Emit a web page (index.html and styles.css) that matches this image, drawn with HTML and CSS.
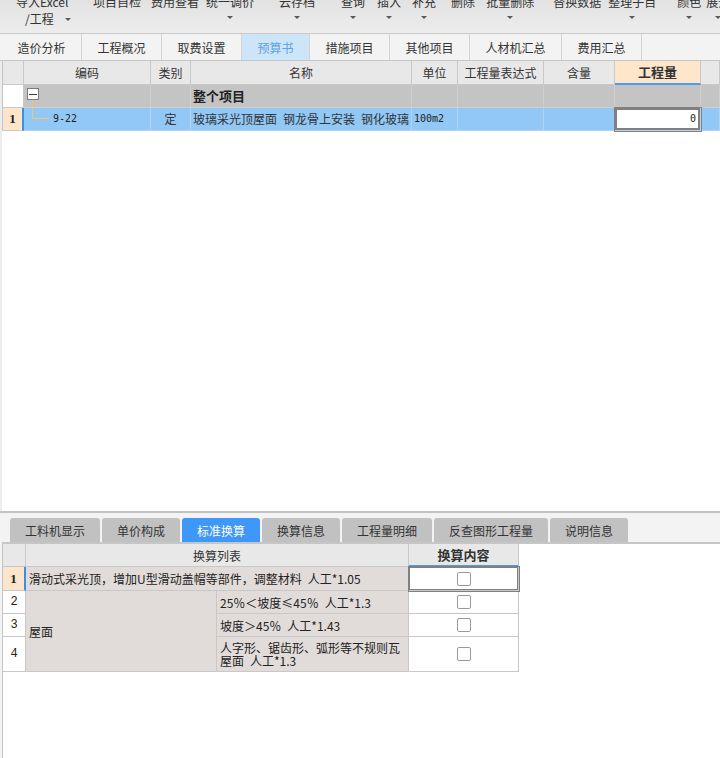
FILE: index.html
```html
<!DOCTYPE html>
<html lang="zh-CN">
<head>
<meta charset="utf-8">
<title>预算书</title>
<link rel="stylesheet" href="styles.css">
</head>
<body>
<div class="app">
  <div class="toolbar">
    <div class="tool tool-import">
      <span>导入Excel</span>
      <span class="tool-sub">/工程<i class="caret"></i></span>
    </div>
    <div class="tool"><span>项目自检</span></div>
    <div class="tool"><span>费用查看</span></div>
    <div class="tool"><span>统一调价</span><i class="caret"></i></div>
    <div class="tool"><span>云存档</span><i class="caret"></i></div>
    <div class="tool"><span>查询</span><i class="caret"></i></div>
    <div class="tool"><span>插入</span><i class="caret"></i></div>
    <div class="tool"><span>补充</span><i class="caret"></i></div>
    <div class="tool"><span>删除</span></div>
    <div class="tool"><span>批量删除</span><i class="caret"></i></div>
    <div class="tool"><span>替换数据</span></div>
    <div class="tool"><span>整理子目</span><i class="caret"></i></div>
    <div class="tool"><span>颜色</span><i class="caret"></i></div>
    <div class="tool"><span>展开</span><i class="caret"></i></div>
  </div>

  <div class="tabs">
    <div class="tab">造价分析</div>
    <div class="tab">工程概况</div>
    <div class="tab">取费设置</div>
    <div class="tab tab-narrow active">预算书</div>
    <div class="tab">措施项目</div>
    <div class="tab">其他项目</div>
    <div class="tab tab-wide">人材机汇总</div>
    <div class="tab">费用汇总</div>
  </div>

  <div class="grid-area">
    <div class="g-row g-head">
      <div class="c num"></div>
      <div class="c">编码</div>
      <div class="c">类别</div>
      <div class="c">名称</div>
      <div class="c">单位</div>
      <div class="c">工程量表达式</div>
      <div class="c">含量</div>
      <div class="c focus-head">工程量</div>
      <div class="c"></div>
    </div>
    <div class="g-row g-group">
      <div class="c num"></div>
      <div class="c code-group"><span class="tree-box"><i class="tree-dash"></i></span><span class="stem"></span></div>
      <div class="c"></div>
      <div class="c left bold-title">整个项目</div>
      <div class="c"></div>
      <div class="c"></div>
      <div class="c"></div>
      <div class="c"></div>
      <div class="c"></div>
    </div>
    <div class="g-row g-sel">
      <div class="c num num-cur">1</div>
      <div class="c code-leaf"><span class="elbow"></span><span class="mono">9-22</span></div>
      <div class="c">定</div>
      <div class="c left clip">玻璃采光顶屋面&ensp;钢龙骨上安装&ensp;钢化玻璃</div>
      <div class="c left"><span class="mono">100m2</span></div>
      <div class="c"></div>
      <div class="c"></div>
      <div class="c edit-cell"><span class="mono">0</span></div>
      <div class="c"></div>
    </div>
  </div>

  <div class="splitter"></div>

  <div class="bottom">
    <div class="btabs">
      <div class="btab btab-wide">工料机显示</div>
      <div class="btab">单价构成</div>
      <div class="btab active">标准换算</div>
      <div class="btab">换算信息</div>
      <div class="btab btab-wide">工程量明细</div>
      <div class="btab btab-xwide">反查图形工程量</div>
      <div class="btab">说明信息</div>
    </div>
    <div class="bgrid-area">
      <div class="bgrid">
        <div class="b head"></div>
        <div class="b head span2">换算列表</div>
        <div class="b head focus-head bold">换算内容</div>

        <div class="b rn rn-cur">1</div>
        <div class="b txt span2 row-cur">滑动式采光顶，增加U型滑动盖帽等部件，调整材料&ensp;人工*1.05</div>
        <div class="b chk chk-sel"><span class="box"></span></div>

        <div class="b rn">2</div>
        <div class="b txt span3">屋面</div>
        <div class="b txt">25％＜坡度≤45％&ensp;人工*1.3</div>
        <div class="b chk"><span class="box"></span></div>

        <div class="b rn">3</div>
        <div class="b txt">坡度＞45％&ensp;人工*1.43</div>
        <div class="b chk"><span class="box"></span></div>

        <div class="b rn">4</div>
        <div class="b txt wrap">人字形、锯齿形、弧形等不规则瓦屋面&ensp;人工*1.3</div>
        <div class="b chk"><span class="box"></span></div>
      </div>
    </div>
  </div>
</div>
</body>
</html>
```
FILE: styles.css
```css
* { box-sizing: border-box; margin: 0; padding: 0; }
html, body { width: 720px; height: 758px; overflow: hidden; }
body {
  font-family: "Noto Sans CJK SC", "Noto Sans", sans-serif;
  font-size: 12px;
  color: #333;
  background: #f3f3f3;
}
.app { display: flex; flex-direction: column; height: 758px; }

/* ---------- toolbar ---------- */
.toolbar {
  flex: none;
  height: 34px;
  display: flex;
  align-items: flex-start;
  overflow: hidden;
  white-space: nowrap;
  background: linear-gradient(#e2e2e2, #ededed);
  border-bottom: 1px solid #c9c9c9;
}
.tool {
  flex: none;
  display: flex;
  flex-direction: column;
  align-items: center;
  margin-top: -6px;
  line-height: 16px;
  color: #333;
}
.caret {
  display: block;
  width: 0; height: 0;
  border-left: 3px solid transparent;
  border-right: 3px solid transparent;
  border-top: 3px solid #5a5a5a;
  margin-top: 6px;
}
.tool-import { width: 54px; align-items: flex-start; }
.tool-sub { display: flex; align-items: center; padding-left: 9px; margin-top: 1px; }
.tool-sub .caret { margin-top: 1px; margin-left: 11px; }

.tool:nth-child(1) { margin-left: 16px; }
.tool:nth-child(2) { margin-left: 23px; }
.tool:nth-child(3) { margin-left: 10px; }
.tool:nth-child(4) { margin-left: 7px; }
.tool:nth-child(5) { margin-left: 25px; }
.tool:nth-child(6) { margin-left: 26px; }
.tool:nth-child(7) { margin-left: 12px; }
.tool:nth-child(8) { margin-left: 11px; }
.tool:nth-child(9) { margin-left: 15px; }
.tool:nth-child(10) { margin-left: 11px; }
.tool:nth-child(11) { margin-left: 19px; }
.tool:nth-child(12) { margin-left: 7px; }
.tool:nth-child(13) { margin-left: 21px; }
.tool:nth-child(14) { margin-left: 5px; }

/* ---------- main tabs ---------- */
.tabs {
  flex: none;
  height: 27px;
  display: flex;
  padding-left: 2px;
  background: #f3f3f3;
  border-bottom: 1px solid #c6c6c6;
}
.tab {
  width: 80px;
  display: flex;
  align-items: center;
  justify-content: center;
  border-right: 1px solid #d4d4d4;
  color: #333;
}
.tab-narrow { width: 68px; }
.tab-wide { width: 92px; }
.tab.active { background: #cde5f9; color: #5ea2e4; }

/* ---------- top grid ---------- */
.grid-area {
  flex: none;
  height: 450px;
  background: #fff;
  border-left: 2px solid #ededed;
}
.g-row {
  display: grid;
  grid-template-columns: 21px 127px 40px 221px 46px 86px 71px 86px 1fr;
  border-left: 1px solid #c4c4c4;
  height: 23px;
}
.g-head { height: 24px; background: #e8e8e8; }
.c {
  display: flex;
  align-items: center;
  justify-content: center;
  border-right: 1px solid #c8c8c8;
  border-bottom: 1px solid #c8c8c8;
  white-space: nowrap;
  overflow: hidden;
  line-height: 14px;
}
.g-head .c { color: #333; }
.focus-head {
  background: #fde6c9;
  font-weight: bold;
  font-size: 13px;
  border-bottom: 2px solid #4a9cf0 !important;
}
.g-group .c { background: #c4c4c4; border-color: #cfcfcf; }
.g-group .num { background: #fff; border-color: #c8c8c8; }
.g-sel .c { background: #92c8f6; border-color: #b3d3ee; }
.g-sel .num { background: #fde5cc; border-color: #c8c8c8; }
.num-cur {
  font-family: "Liberation Serif", serif;
  font-weight: bold;
  font-size: 13px;
  color: #222;
  border-right: 2px solid #3c8ee8 !important;
}
.left { justify-content: flex-start; padding-left: 2px; }
.clip { overflow: hidden; }
.bold-title { font-weight: bold; font-size: 13px; color: #222; }
.mono { font-family: "DejaVu Sans Mono", "Liberation Mono", monospace; font-size: 10px; color: #222; }

.code-group {
  flex-direction: column;
  align-items: flex-start;
  justify-content: flex-start;
  padding: 3px 0 0 3px;
}
.tree-box {
  width: 12px; height: 12px;
  border: 1px solid #7c7c7c;
  background: #fff;
  display: flex;
  align-items: center;
  justify-content: center;
}
.tree-dash { display: block; width: 8px; height: 1px; background: #3a3a3a; }
.stem { width: 1px; flex: 1; margin-left: 5px; background: #f2c46e; }

.code-leaf { justify-content: flex-start; align-items: center; }
.elbow {
  align-self: flex-start;
  flex: none;
  width: 17px;
  height: 11px;
  margin-left: 8px;
  margin-right: 4px;
  border-left: 1px solid #f2c46e;
  border-bottom: 1px solid #f2c46e;
}
.edit-cell {
  position: relative;
  z-index: 1;
  background: #fff !important;
  justify-content: flex-end;
  padding-right: 4px;
  box-shadow: 0 0 0 1px #808080, inset 0 0 0 2px #808080;
}

/* ---------- splitter ---------- */
.splitter { flex: none; height: 2px; background: #c2c2c2; }

/* ---------- bottom panel ---------- */
.bottom { flex: 1; display: flex; flex-direction: column; background: #f3f3f3; }
.btabs {
  flex: none;
  display: flex;
  gap: 2px;
  padding: 5px 0 0 10px;
  height: 29px;
}
.btab {
  width: 78px;
  height: 24px;
  display: flex;
  align-items: center;
  justify-content: center;
  background: #c1c1c1;
  border-radius: 3px 3px 0 0;
  color: #333;
}
.btab-wide { width: 90px; }
.btab-xwide { width: 114px; }
.btab.active { background: #3f97f9; color: #fff; }

.bgrid-area {
  flex: 1;
  background: #fff;
  border-top: 2px solid #c6c6c6;
  margin-left: 2px;
  border-left: 1px solid #c4c4c4;
}
.bgrid {
  display: grid;
  grid-template-columns: 23px 191px 192px 110px;
  grid-template-rows: 23px 24px 23px 23px 35px;
  width: 516px;
}
.b {
  display: flex;
  align-items: center;
  border-right: 1px solid #c8c8c8;
  border-bottom: 1px solid #c8c8c8;
  line-height: 13px;
  overflow: hidden;
}
.head { background: #e8e8e8; justify-content: center; }
.span2 { grid-column: span 2; }
.span3 { grid-row: span 3; }
.bold { font-weight: bold; }
.rn {
  justify-content: center;
  background: #fff;
  font-family: "Liberation Mono", monospace;
  font-size: 12px;
  color: #222;
}
.rn-cur {
  background: #fde5cc;
  font-family: "Liberation Serif", serif;
  font-weight: bold;
  font-size: 13px;
  border-right: 2px solid #3c8ee8;
}
.txt { background: #e1dcd9; padding-left: 3px; white-space: nowrap; color: #222; }
.txt.wrap { white-space: normal; padding-right: 1px; }
.chk { background: #fff; justify-content: center; }
.chk-sel {
  position: relative;
  z-index: 1;
  box-shadow: 0 0 0 1px #808080, inset 0 0 0 1px #808080;
}
.box {
  width: 14px;
  height: 14px;
  border: 1px solid #9a9a9a;
  border-radius: 2px;
  background: #fff;
}
```
